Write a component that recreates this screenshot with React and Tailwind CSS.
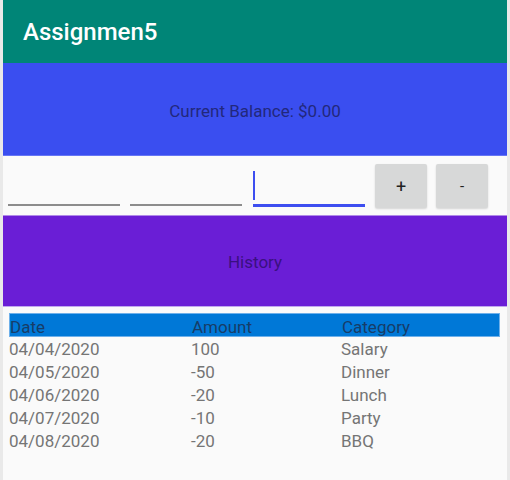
export default function App() {
  const rows = [
    ["04/04/2020", "100", "Salary"],
    ["04/05/2020", "-50", "Dinner"],
    ["04/06/2020", "-20", "Lunch"],
    ["04/07/2020", "-10", "Party"],
    ["04/08/2020", "-20", "BBQ"],
  ];
  return (
    <div className="w-[510px] h-[480px] bg-[#e9e9e9] flex justify-center overflow-hidden" style={{ fontFamily: "Roboto, 'Liberation Sans', sans-serif" }}>
      <div className="w-[504px] h-full bg-[#fafafa] flex flex-col">
        <div className="h-[63px] bg-[#008577] flex items-center px-5">
          <span className="text-white text-[24px] font-medium leading-none">Assignmen5</span>
        </div>
        <div className="h-[93px] bg-[#3a4ef0] flex items-center justify-center border-b border-[#6676f4] pt-[5px]">
          <span className="text-[17px] text-[#22287c]">Current Balance: $0.00</span>
        </div>
        <div className="h-[59px] flex items-start pl-[5px] pt-[8px] gap-[10px]">
          <div className="w-[112px] h-[42px] border-b-2 border-[#8c8c8c]" />
          <div className="w-[112px] h-[42px] border-b-2 border-[#8c8c8c]" />
          <div className="w-[112px] h-[43px] border-b-[3px] border-[#3d4ef0] ml-[1px] relative">
            <div className="absolute left-0 top-[7px] w-[2px] h-[29px] bg-[#3d4ef0]" />
          </div>
          <button className="w-[52px] h-[44px] bg-[#d7d8d8] rounded-[2px] shadow-[0_1px_2px_rgba(0,0,0,0.15)] text-[18px] text-[#222]">+</button>
          <button className="w-[52px] h-[44px] bg-[#d7d8d8] rounded-[2px] shadow-[0_1px_2px_rgba(0,0,0,0.15)] text-[15px] text-[#222] ml-[-1px]">-</button>
        </div>
        <div className="h-[92px] bg-[#6a1ed6] flex items-center justify-center border-t border-[#b08ae8] border-b border-b-[#c0a8ee] pt-[3px]">
          <span className="text-[17px] text-[#3a1080]">History</span>
        </div>
        <div className="px-[6px] pt-[6px]">
          <div className="w-[491px] h-[24px] bg-[#0078d7] border border-[#6eb0ea] grid grid-cols-[182px_150px_1fr] items-center text-[17px] text-[#173c68] leading-[22px] pt-[2px]">
            <span>Date</span>
            <span>Amount</span>
            <span>Category</span>
          </div>
          <div className="pt-[1px]">
            {rows.map((r) => (
              <div key={r[0]} className="grid grid-cols-[182px_150px_1fr] text-[17px] text-[#757575] h-[23px] leading-[23px]">
                <span>{r[0]}</span>
                <span>{r[1]}</span>
                <span>{r[2]}</span>
              </div>
            ))}
          </div>
        </div>
      </div>
    </div>
  );
}
